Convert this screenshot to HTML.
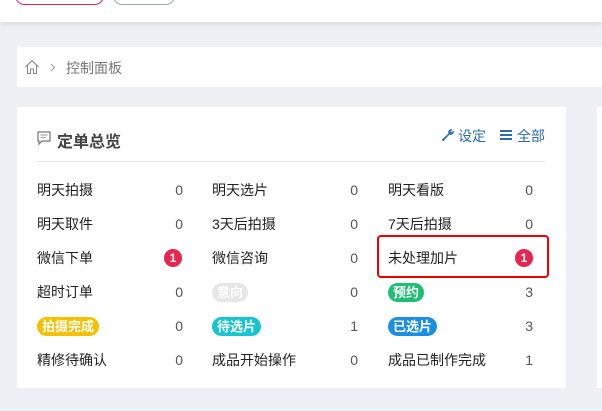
<!DOCTYPE html>
<html><head><meta charset="utf-8"><style>
*{margin:0;padding:0;box-sizing:border-box}
body{width:602px;height:411px;background:#edf0f4;font-family:"Liberation Sans","Noto Sans CJK SC",sans-serif;position:relative;overflow:hidden}
.top{position:absolute;left:0;top:0;width:602px;height:22px;background:#fff;box-shadow:0 2px 6px rgba(0,0,0,.1)}
.pill{position:absolute;top:-14px;height:19px;border-radius:10px;background:#fff}
.bc{position:absolute;left:17px;top:47px;width:600px;height:40px;background:#fff}
.bc span{position:absolute;top:11px;font-size:14px;color:#777}
.card{position:absolute;left:17px;top:107px;width:549px;height:281px;background:#fff}
.card2{position:absolute;left:597px;top:107px;width:20px;height:281px;background:#fff}
.title{position:absolute;top:128px;font-size:16px;font-weight:bold;color:#444}
.hr{position:absolute;top:161px;height:1px;background:#e8e8e8}
.act{position:absolute;top:126px;font-size:14px;color:#2b6cb0}
.l{position:absolute;font-size:14px;color:#222;line-height:20px}
.n{position:absolute;font-size:14px;color:#555;width:20px;text-align:right;line-height:20px}
.b{display:inline-block;color:#fff;font-size:13px;font-weight:bold;border-radius:10px;padding:0 5px;line-height:19px}
.dot{position:absolute;width:18px;height:18px;border-radius:50%;background:#e8254f;color:#fff;font-size:12px;font-weight:bold;text-align:center;line-height:18px}
</style></head><body>
<div class="top"></div>
<div class="pill" style="left:15px;width:89px;border:1px solid #e8254f"></div>
<div class="pill" style="left:113px;width:62px;border:1px solid #9aa"></div>
<div class="bc">
<svg style="position:absolute;left:7px;top:12px" width="16" height="16" viewBox="0 0 16 16" fill="none" stroke="#888" stroke-width="1.1"><path d="M1.5 8L8 1.8 14.5 8M3.5 6.5V14.5H6.5V10H9.5V14.5H12.5V6.5"/></svg>
<svg style="position:absolute;left:33px;top:16px" width="6" height="9" viewBox="0 0 6 9" fill="none" stroke="#999" stroke-width="1"><path d="M1 1l3.5 3.5L1 8"/></svg>
<span style="left:49px">控制面板</span>
</div>
<div class="card"></div>
<div class="card2"></div>
<svg style="position:absolute;left:37px;top:131px" width="14" height="15" viewBox="0 0 14 15" fill="none" stroke="#777" stroke-width="1.2"><path d="M1 1h12v9H5l-3 3v-3H1z"/><path d="M3.5 4h7M3.5 6.5h5" stroke="#aaa"/></svg>
<div class="title" style="left:57px">定单总览</div>
<svg style="position:absolute;left:441px;top:128px" width="14" height="15" viewBox="0 0 14 15"><path d="M12.5 2.5a3 3 0 0 1-4 4L2.5 13a1.3 1.3 0 0 1-1.5-1.5l6.5-6a3 3 0 0 1 4-4l-2 2 1 1z" fill="#2b6cb0"/></svg>
<div class="act" style="left:458px">设定</div>
<svg style="position:absolute;left:500px;top:129px" width="12" height="12" viewBox="0 0 12 12" fill="#2b6cb0"><rect y="1" width="12" height="2"/><rect y="5" width="12" height="2"/><rect y="9" width="12" height="2"/></svg>
<div class="act" style="left:517px">全部</div>
<div class="hr" style="left:37px;width:509px"></div>

<div class="l" style="left:37px;top:180px">明天拍摄</div><div class="n" style="left:163px;top:180px">0</div>
<div class="l" style="left:212px;top:180px">明天选片</div><div class="n" style="left:338px;top:180px">0</div>
<div class="l" style="left:388px;top:180px">明天看版</div><div class="n" style="left:513px;top:180px">0</div>

<div class="l" style="left:37px;top:214px">明天取件</div><div class="n" style="left:163px;top:214px">0</div>
<div class="l" style="left:212px;top:214px">3天后拍摄</div><div class="n" style="left:338px;top:214px">0</div>
<div class="l" style="left:388px;top:214px">7天后拍摄</div><div class="n" style="left:513px;top:214px">0</div>

<div class="l" style="left:37px;top:248px">微信下单</div><div class="dot" style="left:164px;top:249px">1</div>
<div class="l" style="left:212px;top:248px">微信咨询</div><div class="n" style="left:338px;top:248px">0</div>
<div class="l" style="left:388px;top:248px">未处理加片</div><div class="dot" style="left:515px;top:249px">1</div>
<div style="position:absolute;left:377px;top:235px;width:172px;height:43px;border:2px solid #e00;border-radius:4px"></div>

<div class="l" style="left:37px;top:282px">超时订单</div><div class="n" style="left:163px;top:282px">0</div>
<div class="l" style="left:212px;top:282px"><span class="b" style="background:#e6e6e6">意向</span></div><div class="n" style="left:338px;top:282px">0</div>
<div class="l" style="left:388px;top:282px"><span class="b" style="background:#1dbf73">预约</span></div><div class="n" style="left:513px;top:282px">3</div>

<div class="l" style="left:37px;top:316px"><span class="b" style="background:#f5c000">拍摄完成</span></div><div class="n" style="left:163px;top:316px">0</div>
<div class="l" style="left:212px;top:316px"><span class="b" style="background:#17c4d0">待选片</span></div><div class="n" style="left:338px;top:316px">1</div>
<div class="l" style="left:388px;top:316px"><span class="b" style="background:#1a8fe3">已选片</span></div><div class="n" style="left:513px;top:316px">3</div>

<div class="l" style="left:37px;top:350px">精修待确认</div><div class="n" style="left:163px;top:350px">0</div>
<div class="l" style="left:212px;top:350px">成品开始操作</div><div class="n" style="left:338px;top:350px">0</div>
<div class="l" style="left:388px;top:350px">成品已制作完成</div><div class="n" style="left:513px;top:350px">1</div>
</body></html>
